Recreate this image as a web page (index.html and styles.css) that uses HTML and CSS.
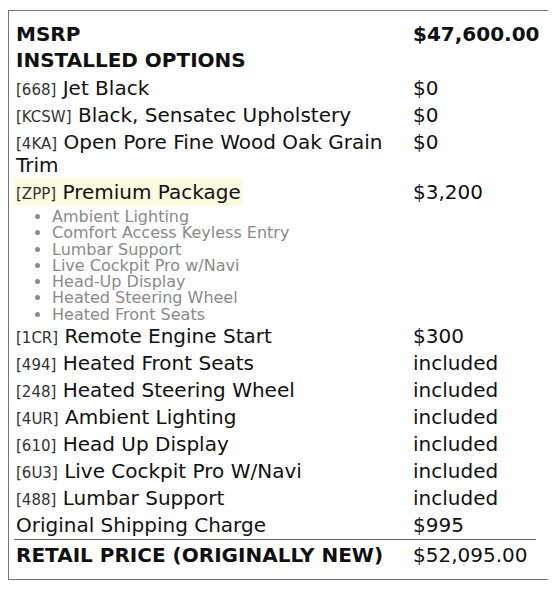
FILE: index.html
```html
<!DOCTYPE html>
<html>
<head>
<meta charset="utf-8">
<link rel="stylesheet" href="styles.css">
</head>
<body>
<div class="sticker">
  <table class="price-table">
    <tr class="msrp">
      <td class="label"><b>MSRP</b></td>
      <td class="value"><b>$47,600.00</b></td>
    </tr>
    <tr class="section">
      <td class="label" colspan="2"><b>INSTALLED OPTIONS</b></td>
    </tr>
    <tr>
      <td class="label"><span class="code">[668]</span> Jet Black</td>
      <td class="value">$0</td>
    </tr>
    <tr>
      <td class="label"><span class="code">[KCSW]</span> Black, Sensatec Upholstery</td>
      <td class="value">$0</td>
    </tr>
    <tr>
      <td class="label"><span class="code">[4KA]</span> Open Pore Fine Wood Oak Grain Trim</td>
      <td class="value">$0</td>
    </tr>
    <tr>
      <td class="label"><span class="hl"><span class="code">[ZPP]</span> Premium Package</span></td>
      <td class="value">$3,200</td>
    </tr>
    <tr class="sub">
      <td class="label" colspan="2">
        <ul class="pkg-list">
          <li>Ambient Lighting</li>
          <li>Comfort Access Keyless Entry</li>
          <li>Lumbar Support</li>
          <li>Live Cockpit Pro w/Navi</li>
          <li>Head-Up Display</li>
          <li>Heated Steering Wheel</li>
          <li>Heated Front Seats</li>
        </ul>
      </td>
    </tr>
    <tr>
      <td class="label"><span class="code">[1CR]</span> Remote Engine Start</td>
      <td class="value">$300</td>
    </tr>
    <tr>
      <td class="label"><span class="code">[494]</span> Heated Front Seats</td>
      <td class="value">included</td>
    </tr>
    <tr>
      <td class="label"><span class="code">[248]</span> Heated Steering Wheel</td>
      <td class="value">included</td>
    </tr>
    <tr>
      <td class="label"><span class="code">[4UR]</span> Ambient Lighting</td>
      <td class="value">included</td>
    </tr>
    <tr>
      <td class="label"><span class="code">[610]</span> Head Up Display</td>
      <td class="value">included</td>
    </tr>
    <tr>
      <td class="label"><span class="code">[6U3]</span> Live Cockpit Pro W/Navi</td>
      <td class="value">included</td>
    </tr>
    <tr>
      <td class="label"><span class="code">[488]</span> Lumbar Support</td>
      <td class="value">included</td>
    </tr>
    <tr>
      <td class="label">Original Shipping Charge</td>
      <td class="value">$995</td>
    </tr>
    <tr class="total">
      <td class="label"><b>RETAIL PRICE (ORIGINALLY NEW)</b></td>
      <td class="value">$52,095.00</td>
    </tr>
  </table>
</div>
</body>
</html>
```

FILE: styles.css
```css
html, body {
  background: #ffffff;
}
body {
  margin: 10px 8px;
  font-family: "DejaVu Sans", sans-serif;
  color: #111111;
}
.sticker {
  width: 527px;
  border: 1px solid #777777;
  padding: 10px 10px 10px 5px;
  background: #ffffff;
}
.price-table {
  width: 522px;
  table-layout: fixed;
  border-collapse: collapse;
  font-size: 20px;
  line-height: 23px;
}
.price-table td {
  padding: 2px 2px;
  vertical-align: top;
}
.price-table .label {
  width: 393px;
}
.price-table .value {
  white-space: nowrap;
}
.msrp td {
  padding-top: 2px;
  padding-bottom: 1px;
}
.section td {
  padding-top: 2px;
  padding-bottom: 3px;
}
.code {
  font-size: 15px;
  line-height: 1;
  color: #333333;
}
.hl {
  background: #fbfbe0;
  box-shadow: 0 0 3px 2px #fbfbe0;
}
.sub td {
  padding: 3px 0 0 0;
}
.pkg-list {
  margin: 0;
  padding-left: 38px;
  font-size: 16px;
  line-height: 16.3px;
  color: #8a8a8a;
}
.total td {
  border-top: 1px solid #666666;
  padding-top: 4px;
  padding-bottom: 2px;
}
```
